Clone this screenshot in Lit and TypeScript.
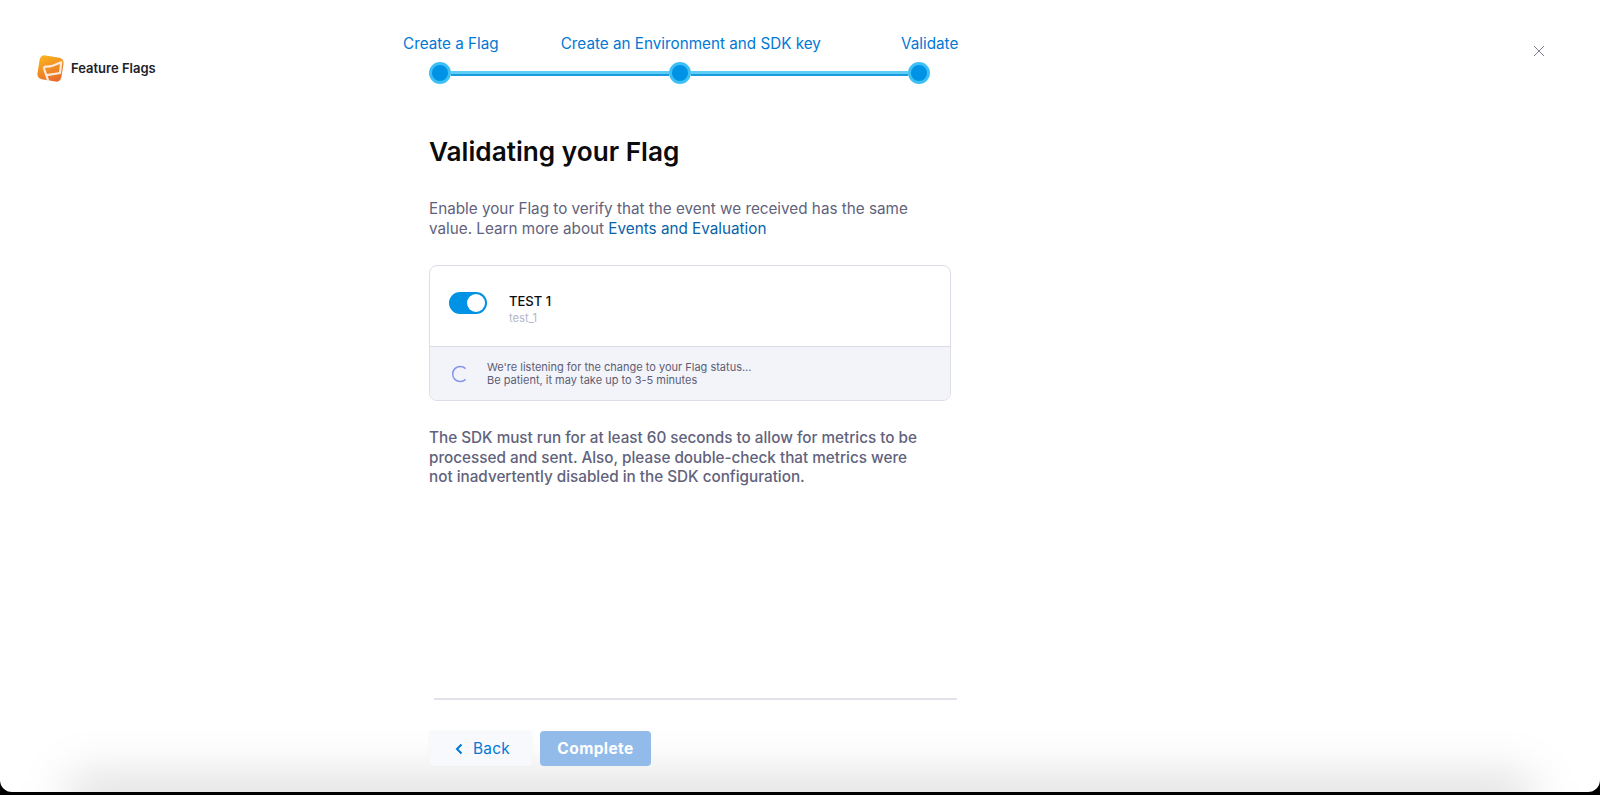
import { LitElement, html, css } from "lit";
import { customElement } from "lit/decorators.js";

@customElement("app-root")
export class AppRoot extends LitElement {
  static styles = css`
    :host { display: block; width: 1600px; height: 795px; background: #000; overflow: hidden; font-family: Inter, "Liberation Sans", sans-serif; }
    * { box-sizing: border-box; }
    .window { position: relative; height: 792px; background: #fff; border-radius: 0 0 12px 12px; overflow: hidden; display: grid; grid-template-columns: 402px 560px 1fr; }
    .window::after { content: ""; position: absolute; left: 70px; right: 70px; bottom: -26px; height: 40px; background: rgba(0,0,0,.15); filter: blur(24px); pointer-events: none; }
    .brand { display: flex; align-items: center; gap: 6px; padding: 53px 0 0 36px; height: 83px; font-size: 13px; font-weight: 600; color: #22222a; }
    .center { display: flex; flex-direction: column; height: 792px; position: relative; z-index: 1; }
    .labels { display: flex; gap: 62px; padding: 35px 0 0 1px; height: 54px; font-size: 15.25px; line-height: 18px; color: #0278d5; white-space: nowrap; }
    .labels span:last-child { margin-left: 18px; }
    .track { margin: 8px 0 0 27px; width: 500px; height: 22px; display: flex; align-items: center; }
    .dot { width: 22px; height: 22px; flex: none; border-radius: 50%; background: #0092e4; border: 3.5px solid #3dc0f5; }
    .line { width: 217.5px; height: 5px; flex: none; background: linear-gradient(#5ccdf6 0 65%, #1a9be0 65%); }
    .body { padding-left: 27px; width: 549px; }
    h1 { margin: 50px 0 0; font-size: 26.2px; line-height: 36px; font-weight: 600; color: #0b0b0d; }
    .intro { margin: 29px 0 0; font-size: 15.25px; line-height: 20px; color: #61627c; width: 490px; }
    .intro a { color: #0a62a8; text-decoration: none; }
    .card { margin-top: 26px; width: 522px; height: 136px; border: 1px solid #dcdde7; border-radius: 8px; overflow: hidden; display: flex; flex-direction: column; }
    .top { height: 81px; flex: none; display: flex; align-items: center; gap: 22px; padding: 0 0 7px 19px; border-bottom: 1px solid #d9dae5; }
    .toggle { width: 38px; height: 22px; border-radius: 11px; background: #0092e4; display: flex; justify-content: flex-end; align-items: center; padding-right: 2px; flex: none; }
    .knob { width: 18px; height: 18px; border-radius: 50%; background: #fff; }
    .labelset { padding-top: 12px; }
    .name { font-size: 13px; line-height: 16px; font-weight: 500; color: #0b0b0d; }
    .key { font-size: 11.2px; line-height: 14px; margin-top: 2px; color: #b4b5c8; }
    .bottom { flex: 1; background: #f3f3fa; display: flex; align-items: center; gap: 18px; padding-left: 21px; font-size: 11px; line-height: 13px; color: #5c5e74; }
    .note { margin: 27px 0 0; width: 490px; font-size: 15.27px; line-height: 19.5px; font-weight: 500; color: #61627c; }
    .foot { position: absolute; top: 698px; left: 32px; width: 523px; border-top: 2px solid #e2e3ea; }
    .buttons { position: absolute; top: 731px; left: 27px; display: flex; gap: 8px; }
    .btn { height: 35px; border-radius: 4px; display: flex; align-items: center; justify-content: center; font-family: inherit; border: 0; letter-spacing: .3px; font-size: 15.4px; }
    .back { width: 103px; gap: 10px; padding: 0 6px 0 10px; background: #f8f9fd; color: #0278d5; box-shadow: 0 0 2px rgba(40,40,80,.06); }
    .complete { width: 111px; background: #92bbea; color: #fff; font-weight: 700; font-size: 15.5px; letter-spacing: .4px; }
    .close { justify-self: end; margin: 45px 55px 0 0; width: 12px; height: 12px; }
  `;

  render() {
    return html`
      <div class="window">
        <div class="brand">
          <svg width="29" height="29" viewBox="0 0 29 29">
            <defs><linearGradient id="g" x1="0.2" y1="0" x2="0.8" y2="1"><stop offset="0" stop-color="#fbb01c"/><stop offset="1" stop-color="#e66a2e"/></linearGradient></defs>
            <rect x="2.4" y="2.4" width="24.2" height="24.2" rx="5" transform="rotate(9 14.5 14.5)" fill="url(#g)"/>
            <path d="M12.3 27.2 L8 14.5 Q7.8 12.8 9.8 12.7 Q13.5 12.8 17.3 11.5 L25.2 8.2 L24 19 L10.8 21.2" fill="none" stroke="#fdeadb" stroke-width="2.2" stroke-linejoin="round"/>
          </svg>
          <span>Feature Flags</span>
        </div>
        <div class="center">
          <div class="labels"><span>Create a Flag</span><span>Create an Environment and SDK key</span><span>Validate</span></div>
          <div class="track"><div class="dot"></div><div class="line"></div><div class="dot"></div><div class="line"></div><div class="dot"></div></div>
          <div class="body">
            <h1>Validating your Flag</h1>
            <p class="intro">Enable your Flag to verify that the event we received has the same value. Learn more about <a>Events and Evaluation</a></p>
            <div class="card">
              <div class="top">
                <div class="toggle"><div class="knob"></div></div>
                <div class="labelset"><div class="name">TEST 1</div><div class="key">test_1</div></div>
              </div>
              <div class="bottom">
                <svg width="18" height="18" viewBox="0 0 18 18"><path d="M14.6 3.6 A7.6 7.6 0 1 0 14.6 14.4" fill="none" stroke="#8496ee" stroke-width="1.5"/></svg>
                <div>We're listening for the change to your Flag status...<br>Be patient, it may take up to 3-5 minutes</div>
              </div>
            </div>
            <p class="note">The SDK must run for at least 60 seconds to allow for metrics to be processed and sent. Also, please double-check that metrics were not inadvertently disabled in the SDK configuration.</p>
          </div>
          <div class="foot"></div>
          <div class="buttons">
            <button class="btn back"><svg width="8" height="12" viewBox="0 0 8 12"><path d="M6.5 1.5 L2 6 L6.5 10.5" fill="none" stroke="#0278d5" stroke-width="2"/></svg>Back</button>
            <button class="btn complete">Complete</button>
          </div>
        </div>
        <svg class="close" viewBox="0 0 12 12"><path d="M1 1 L11 11 M11 1 L1 11" stroke="#7d7f98" stroke-width="1"/></svg>
      </div>`;
  }
}
